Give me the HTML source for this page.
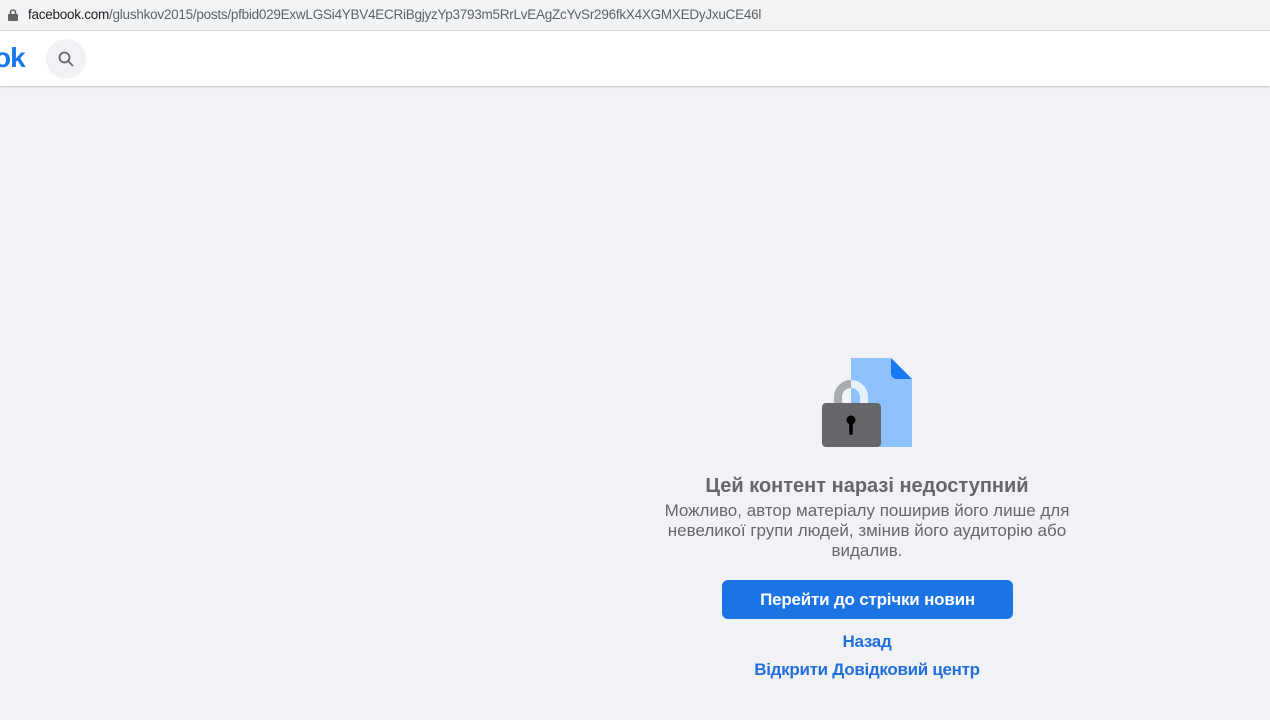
<!DOCTYPE html>
<html><head><meta charset="utf-8"><style>
html,body{margin:0;padding:0;width:1270px;height:720px;overflow:hidden;background:#f0f2f5;font-family:"Liberation Sans","DejaVu Sans",sans-serif;}
.addr{position:absolute;left:0;top:0;width:1270px;height:30px;background:#f1f3f4;border-bottom:1px solid #dadce0;}
.addr .t{position:absolute;left:28px;top:7px;font-size:13.5px;color:#5f6368;letter-spacing:-0.25px;white-space:nowrap}
.addr .t b{font-weight:normal;color:#202124}
.hdr{position:absolute;left:0;top:31px;width:1270px;height:55px;background:#fff;box-shadow:0 1px 2px rgba(0,0,0,.2);}
.logo{position:absolute;left:-6px;top:11px;font-size:28px;font-weight:bold;color:#1877f2;letter-spacing:-1px}
.srch{position:absolute;left:46px;top:8px;width:40px;height:40px;border-radius:50%;background:#f0f2f5}
.c{position:absolute;left:617px;width:500px;text-align:center}
h1{margin:0;font-size:20px;font-weight:bold;color:#65676b}
p{margin:0;font-size:17px;line-height:20px;color:#65676b}
.btn{position:absolute;left:722px;top:580px;width:291px;height:39px;border-radius:6px;background:#1b74e4;color:#fff;font-weight:bold;font-size:17px;line-height:39px;text-align:center;letter-spacing:-0.2px}
.lk{font-size:17px;font-weight:bold;color:#216fdb;letter-spacing:-0.3px}
</style></head><body>
<div class="addr">
<svg style="position:absolute;left:8px;top:9px" width="10" height="12" viewBox="0 0 10 12"><rect x="0" y="5" width="10" height="7" rx="1" fill="#5f6368"/><path d="M2.5 5V3.5a2.5 2.5 0 0 1 5 0V5" stroke="#5f6368" stroke-width="1.6" fill="none"/></svg>
<div class="t"><b>facebook.com</b>/glushkov2015/posts/pfbid029ExwLGSi4YBV4ECRiBgjyzYp3793m5RrLvEAgZcYvSr296fkX4XGMXEDyJxuCE46l</div>
</div>
<div class="hdr">
<div class="logo">ok</div>
<div class="srch"><svg width="40" height="40" viewBox="0 0 40 40"><circle cx="18.5" cy="18.5" r="5" stroke="#65676b" stroke-width="1.8" fill="none"/><path d="M22 22l4.5 4.5" stroke="#65676b" stroke-width="1.8" stroke-linecap="round"/></svg></div>
</div>
<svg style="position:absolute;left:820px;top:356px" width="96" height="94" viewBox="820 356 96 94">
<path d="M851 358H891L912 379V447H851Z" fill="#90c1ff"/>
<path d="M891 358L912 379H897a6 6 0 0 1-6-6Z" fill="#1877f2"/>
<path d="M838 404V397a13 13 0 0 1 13-13" stroke="#a8abaf" stroke-width="8" fill="none"/>
<path d="M851 384a13 13 0 0 1 13 13V404" stroke="#e8f2ff" stroke-width="8" fill="none"/>
<rect x="822" y="403" width="59" height="44" rx="4" fill="#65676b"/>
<circle cx="851" cy="420" r="4.5" fill="#000"/>
<rect x="849.2" y="421" width="3.6" height="14" rx="1.8" fill="#000"/>
</svg>
<div class="c" style="top:475px"><h1>Цей контент наразі недоступний</h1></div>
<div class="c" style="top:501px"><p>Можливо, автор матеріалу поширив його лише для<br>невеликої групи людей, змінив його аудиторію або<br>видалив.</p></div>
<div class="btn">Перейти до стрічки новин</div>
<div class="c lk" style="top:632px">Назад</div>
<div class="c lk" style="top:660px">Відкрити Довідковий центр</div>
</body></html>
